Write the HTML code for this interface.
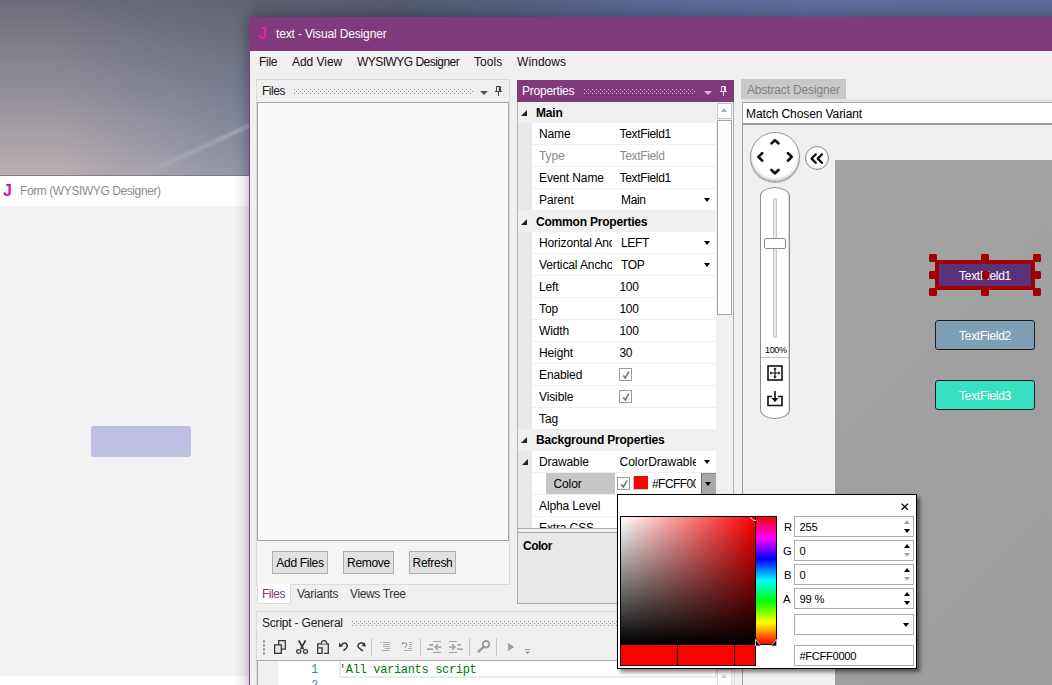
<!DOCTYPE html>
<html>
<head>
<meta charset="utf-8">
<title>text - Visual Designer</title>
<style>
*{box-sizing:border-box;margin:0;padding:0}
html,body{width:1052px;height:685px;overflow:hidden}
body{font-family:"Liberation Sans",sans-serif;font-size:12px;color:#000;position:relative;
background:linear-gradient(to right,#6c6d79 0,#70717c 150px,#5c6070 255px,#525a70 400px,#546080 520px,#57678f 626px,#5d6e9e 800px,#5b6d9d 1052px) 0 0/100% 20px no-repeat,#fff;
}
.abs{position:absolute}
.t{position:absolute;white-space:nowrap;line-height:14px;font-size:12px}
/* ---------- Form window ---------- */
#formwin{left:0;top:175px;width:252px;height:510px;background:#fff;border-top:1px solid #7d7d84}
#formtitle{left:0;top:0;width:252px;height:30px;background:#fff}
#formbody{left:0;top:30px;width:252px;height:470px;background:#f3f3f3}
#formrect{left:91px;top:250px;width:100px;height:31px;background:#bfbfe4;border-radius:3px}
/* ---------- Main window ---------- */
#main{left:249px;top:17px;width:820px;height:690px;background:#f0f0f0;border:1px solid #80397b;box-shadow:0 0 13px 1px rgba(0,0,0,.32)}
#titlebar{left:0;top:0;width:820px;height:33px;background:#80397b}
.menu{top:37px;color:#111}
.panelhdr{height:22px}
.grip{position:absolute;height:5px;--c:#909090;background:linear-gradient(to right,var(--c) 1px,rgba(0,0,0,0) 1px) 0 0/4px 1px repeat-x,linear-gradient(to right,var(--c) 1px,rgba(0,0,0,0) 1px) 2px 2px/4px 1px repeat-x,linear-gradient(to right,var(--c) 1px,rgba(0,0,0,0) 1px) 0 4px/4px 1px repeat-x}
.btn{position:absolute;height:23px;background:#e1e1e1;border:1px solid #adadad;text-align:center;line-height:22px;font-size:12px;letter-spacing:-.3px}
/* property grid */
#grid{left:268px;top:84px;width:199px;height:427px;overflow:hidden;background:#f0f0f0}
.row{position:absolute;left:0;width:198px;height:22px}
.cat{background:#f0f0f0;font-weight:bold}
.cat .lbl{position:absolute;left:18px;top:4px;line-height:14px;white-space:nowrap;font-size:12px;letter-spacing:-.2px}
.tri{position:absolute;left:3px;top:8px;width:0;height:0;border-left:6px solid transparent;border-bottom:6px solid #222}
.prop .ind{position:absolute;left:0;top:0;width:14px;height:22px;background:#e8e8e8}
.prop .cell{position:absolute;left:14px;top:0;width:184px;height:21px;background:#fff}
.prop .l{position:absolute;left:21px;top:4px;width:73px;letter-spacing:-.12px;overflow:hidden;white-space:nowrap;line-height:14px;font-size:12px}
.prop .v{position:absolute;left:101.5px;top:4px;letter-spacing:-.33px;white-space:nowrap;line-height:14px;font-size:12px}
.dd{position:absolute;left:185.700px;top:9px;width:0;height:0;border-left:3.800px solid transparent;border-right:3.800px solid transparent;border-top:4px solid #000}
.gray{color:#8a8a8a}
.cb{position:absolute;left:101px;top:4px;width:13px;height:13px;border:1px solid #9a9a9a;background:#fff}
/* popup */
#popup{left:617px;top:494px;width:300px;height:175px;background:#fff;border:1px solid #000;box-shadow:3px 3px 4px rgba(0,0,0,.5)}
.inp{position:absolute;left:176px;width:120px;height:21px;border:1px solid #ababab;background:#fff}
.inp span{position:absolute;left:4.500px;top:3px;line-height:14px;font-size:11.2px;letter-spacing:-.2px}
.plbl{position:absolute;font-size:11.2px;line-height:14px}
.up{position:absolute;right:3px;top:3px;width:0;height:0;border-left:3.5px solid transparent;border-right:3.5px solid transparent;border-bottom:4px solid #000}
.dn{position:absolute;right:3px;top:12px;width:0;height:0;border-left:3.5px solid transparent;border-right:3.5px solid transparent;border-top:4px solid #000}
.dis{opacity:.35}
</style>
</head>
<body>

<!-- desktop wallpaper (sky) visible at left -->
<div class="abs" style="left:0;top:0;width:252px;height:177px;background:linear-gradient(to bottom,#6d6d79 0,#918e98 90px,#bbb0b2 176px);overflow:hidden">
  <div class="abs" style="left:0;top:0;width:252px;height:177px;background:linear-gradient(to bottom,#5e6272 0,#767b91 90px,#9095a8 176px);-webkit-mask-image:linear-gradient(to right,rgba(0,0,0,0) 60px,rgba(0,0,0,.5) 160px,#000 250px);mask-image:linear-gradient(to right,rgba(0,0,0,0) 60px,rgba(0,0,0,.5) 160px,#000 250px)"></div>
  <div class="abs" style="left:138px;top:150px;width:124px;height:4px;background:linear-gradient(to right,rgba(190,196,210,.1),rgba(190,196,210,.55));filter:blur(1px);transform-origin:0 50%;transform:translate(0,25px) rotate(-24.800deg)"></div>
</div>

<!-- Form (WYSIWYG Designer) window -->
<div id="formwin" class="abs">
  <div id="formtitle" class="abs">
    <span class="t" style="left:3px;top:6px;font-size:16px;font-weight:bold;color:#d0189a;line-height:18px">J</span>
    <span class="t" id="ft" style="left:20px;top:8px;color:#8c8c8c;letter-spacing:-0.41px">Form (WYSIWYG Designer)</span>
  </div>
  <div id="formbody" class="abs"></div>
  <div id="formrect" class="abs"></div>
</div>

<!-- Main window -->
<div id="main" class="abs">
  <div id="titlebar" class="abs">
    <span class="t" style="left:8px;top:7px;font-size:16px;font-weight:bold;color:#e0209c;line-height:18px">J</span>
    <span class="t" id="tt" style="left:26px;top:9px;color:#fff;letter-spacing:-0.15px">text - Visual Designer</span>
  </div>
  <span class="t menu" id="m1" style="left:9px;letter-spacing:-0.29px">File</span>
  <span class="t menu" id="m2" style="left:42px;letter-spacing:-0.04px">Add View</span>
  <span class="t menu" id="m3" style="left:107px;letter-spacing:-0.53px">WYSIWYG Designer</span>
  <span class="t menu" id="m4" style="left:224px;letter-spacing:0.04px">Tools</span>
  <span class="t menu" id="m5" style="left:267px;letter-spacing:0.07px">Windows</span>

  <!-- Files panel (coords relative to 250,18) -->
  <div class="abs" style="left:6px;top:61px;width:254px;height:506px;border:1px solid #dadada;border-bottom:none"></div>
  <span class="t" id="fh" style="left:12px;top:66px;color:#222;letter-spacing:-0.47px">Files</span>
  <div class="grip" style="left:44px;top:71px;width:179px"></div>
  <div class="abs" style="left:229.500px;top:73px;width:0;height:0;border-left:4px solid transparent;border-right:4px solid transparent;border-top:4px solid #555"></div>
  <svg class="abs" style="left:244px;top:67px" width="9" height="12" viewBox="0 0 9 12"><path d="M2.5 1.5h4v5h-4z M1 6.5h7 M4.5 6.5v4.5" fill="none" stroke="#444" stroke-width="1"/><path d="M5.5 1.5v5" stroke="#444" stroke-width="1.4"/></svg>
  <div class="abs" style="left:7px;top:523px;width:252px;height:43px;background:#f5f5f5"></div>
  <div class="abs" style="left:7px;top:84px;width:252px;height:439px;background:#fafafa;border:1px solid #a4a4a4"></div>
  <div class="btn" id="b1" style="left:22px;top:533px;width:56px">Add Files</div>
  <div class="btn" id="b2" style="left:93px;top:533px;width:51px">Remove</div>
  <div class="btn" id="b3" style="left:159px;top:533px;width:47px">Refresh</div>
  <div class="abs" style="left:6px;top:566px;width:254px;height:1px;background:#dadada"></div>
  <div class="abs" style="left:7px;top:566px;width:34px;height:20px;background:#fff;border:1px solid #dadada;border-top:none"></div>
  <span class="t" id="tb1" style="left:12px;top:569px;color:#80397b;letter-spacing:-0.47px">Files</span>
  <span class="t" id="tb2" style="left:47px;top:569px;color:#333;letter-spacing:-0.24px">Variants</span>
  <span class="t" id="tb3" style="left:100px;top:569px;color:#333;letter-spacing:-0.36px">Views Tree</span>

  <!-- Script panel -->
  <div class="abs" style="left:6px;top:593px;width:479px;height:100px;border:1px solid #dadada"></div>
  <span class="t" id="sh" style="left:12px;top:598px;color:#222;letter-spacing:-0.2px">Script - General</span>
  <div class="grip" style="left:102px;top:603px;width:300px"></div>
  <svg id="toolbar" class="abs" style="left:7px;top:616px" width="477" height="26" viewBox="257 634 477 26">
    <g fill="#8a8a8a"><rect x="263" y="640.5" width="2" height="2"/><rect x="263" y="644.5" width="2" height="2"/><rect x="263" y="648.5" width="2" height="2"/><rect x="263" y="652.5" width="2" height="2"/></g>
    <!-- copy -->
    <g fill="#e6e6e6" stroke="#333" stroke-width="1.250"><path d="M278.700 640.700h6.600v8.400h-6.600z"/><path d="M274.600 644.800h6.700v8.500h-6.700z"/></g>
    <!-- cut -->
    <g fill="none" stroke="#333"><path d="M298.700 640.400l4.700 8.800M305.500 640.400l-4.700 8.800" stroke-width="1.700"/><ellipse cx="298.700" cy="651.500" rx="2.100" ry="1.850" stroke-width="1.200"/><ellipse cx="305.500" cy="651.500" rx="2.100" ry="1.850" stroke-width="1.200"/></g>
    <!-- paste -->
    <g stroke="#333" stroke-width="1.250"><path d="M317.700 647.500v-3.600h10.600v9.400h-4.200" fill="#e6e6e6"/><path d="M321.400 643.700c0-4 5.200-4 5.200 0" fill="#f0f0f0"/><path d="M317.700 647.900h4.400v5.400h-4.400z" fill="#f6f6f6"/></g>
    <!-- undo / redo -->
    <g fill="none" stroke="#333" stroke-width="1.500" stroke-linecap="butt"><path d="M341.500 645.200C342.500 642.600 346.400 642.200 347.200 645.200 347.800 647.500 345.600 649 343.500 650.500"/><path d="M362.900 651.100L358.800 647.800C357.200 646.200 358 643.200 360.600 642.900 362.200 642.700 363.600 643.600 364 645"/></g>
    <path d="M339 642.800l.2 4.500 3.900-1.100z" fill="#333"/><path d="M364.600 642.200l1.400 4.500-4.300-.9z" fill="#333"/>
    <g fill="#c2c2c2"><rect x="371" y="638.500" width="1" height="17.500"/><rect x="420" y="638.500" width="1" height="17.500"/><rect x="469" y="638.500" width="1" height="17.500"/><rect x="496" y="638.500" width="1" height="17.500"/></g>
    <!-- comment / uncomment (disabled) -->
    <g fill="#a9a9a9"><rect x="380" y="642" width="1.300" height="1"/><rect x="383" y="642" width="7" height="1"/><rect x="385" y="648" width="5" height="1"/><rect x="382" y="650" width="8" height="1"/>
    <rect x="409" y="642" width="3" height="1"/><rect x="408" y="648" width="4" height="1"/><rect x="404" y="650" width="8" height="1"/></g>
    <g fill="#92c092"><rect x="383" y="644" width="7" height="1"/><rect x="383" y="646" width="7" height="1"/><rect x="409" y="644" width="3" height="1"/><rect x="409" y="646" width="3" height="1"/></g>
    <path d="M403.300 643.300c2.200-1.200 4.200.2 3.400 2l-1.900 2.300" stroke="#9a9a9a" stroke-width="1.100" fill="none"/><path d="M402 642v2.800l2.600-1.800z" fill="#9a9a9a"/>
    <!-- outdent / indent (disabled) -->
    <g fill="#a0a0a0"><rect x="433" y="641" width="8" height="1"/><rect x="433" y="652" width="8" height="1"/><rect x="429" y="644" width="4" height="1.700"/><rect x="427" y="648.300" width="6" height="1.700"/>
    <rect x="434.500" y="646.300" width="6.500" height="1.500"/><path d="M434 647l3.400-3.300 1.100 1-2.400 2.300 2.400 2.300-1.100 1z"/>
    <rect x="449" y="641" width="8" height="1"/><rect x="449" y="652" width="8" height="1"/><rect x="457.300" y="644" width="3.500" height="1.700"/><rect x="457.300" y="648.300" width="5.500" height="1.700"/>
    <rect x="449" y="646.300" width="6.500" height="1.500"/><path d="M456 647l-3.400-3.300-1.100 1 2.400 2.300-2.400 2.300 1.100 1z"/></g>
    <!-- search -->
    <g stroke="#9a9a9a" fill="none"><circle cx="486" cy="644.300" r="3.300" stroke-width="1.800"/><path d="M483.600 646.800l-5 4.800" stroke-width="2.400" stroke-linecap="round"/></g>
    <!-- play / overflow -->
    <path d="M508.200 642.800l5.800 4.200-5.800 4.200z" fill="#9e9e9e"/>
    <path d="M525 649h5v1h-5zM525 651.500h5l-2.500 3z" fill="#9e9e9e"/>
  </svg>
  <div class="abs" style="left:7px;top:642px;width:477px;height:60px;background:#fff;border:1px solid #ababab"></div>
  <div class="abs" style="left:8px;top:643px;width:20px;height:60px;background:#f0f0f0"></div>
  <div class="abs" style="left:89px;top:643px;width:378px;height:17px;border:2px solid #ebebeb;border-top:none"></div>
  <span class="t" style="left:61px;top:645px;font-family:'Liberation Mono',monospace;font-size:12px;color:#2b91af">1</span>
  <span class="t" style="left:61px;top:661px;font-family:'Liberation Mono',monospace;font-size:12px;color:#2b91af">2</span>
  <span class="t" id="code" style="left:89px;top:645px;font-family:'Liberation Mono',monospace;font-size:12px;letter-spacing:-.33px;color:#008000">'All variants script</span>
  <div class="abs" style="left:467px;top:643px;width:17px;height:60px;background:#f0f0f0"></div>
  <div class="abs" style="left:467px;top:651px;width:15px;height:17px;background:#fdfdfd;border:1px solid #dcdcdc"></div>
  <div class="abs" style="left:471px;top:656px;width:0;height:0;border-left:3.5px solid transparent;border-right:3.5px solid transparent;border-bottom:4px solid #cfcfcf"></div>

  <!-- Properties panel -->
  <div class="abs" style="left:267px;top:62px;width:217px;height:524px;border:1px solid #b0b0b0;border-top:none;background:#f0f0f0"></div>
  <div class="abs" style="left:267px;top:62px;width:217px;height:22px;background:#80397b"></div>
  <span class="t" id="ph" style="left:272px;top:66px;color:#fff;letter-spacing:-0.24px">Properties</span>
  <div class="grip" style="left:334px;top:71px;width:111px;--c:#d9c3d7"></div>
  <div class="abs" style="left:454px;top:73px;width:0;height:0;border-left:4px solid transparent;border-right:4px solid transparent;border-top:4px solid #dcb8d9"></div>
  <svg class="abs" style="left:469px;top:67px" width="9" height="12" viewBox="0 0 9 12"><path d="M2.5 1.5h4v5h-4z M1 6.5h7 M4.5 6.5v4.5" fill="none" stroke="#f0d8ee" stroke-width="1"/><path d="M5.5 1.5v5" stroke="#f0d8ee" stroke-width="1.4"/></svg>
  <div id="grid" class="abs">
<div class="row cat" style="top:0px;height:21px"><div class="tri"></div><span class="lbl">Main</span></div>
<div class="row prop" style="top:21px;height:22px"><div class="ind" style="height:22px"></div><div class="cell" style="height:21px"></div><span class="l">Name</span><span class="v">TextField1</span></div>
<div class="row prop" style="top:43px;height:22px"><div class="ind" style="height:22px"></div><div class="cell" style="height:21px"></div><span class="l gray">Type</span><span class="v gray">TextField</span></div>
<div class="row prop" style="top:65px;height:22px"><div class="ind" style="height:22px"></div><div class="cell" style="height:21px"></div><span class="l">Event Name</span><span class="v">TextField1</span></div>
<div class="row prop" style="top:87px;height:21px"><div class="ind" style="height:21px"></div><div class="cell" style="height:21px"></div><span class="l">Parent</span><span class="v" style="left:103px">Main</span><div class="dd"></div></div>
<div class="row cat" style="top:108px;height:22px"><div class="tri" style="top:9px"></div><span class="lbl" style="top:5px">Common Properties</span></div>
<div class="row prop" style="top:130px;height:22px"><div class="ind" style="height:22px"></div><div class="cell" style="height:21px"></div><span class="l">Horizontal Anchor</span><span class="v" style="left:103px">LEFT</span><div class="dd"></div></div>
<div class="row prop" style="top:152px;height:22px"><div class="ind" style="height:22px"></div><div class="cell" style="height:21px"></div><span class="l">Vertical Anchor</span><span class="v" style="left:103px">TOP</span><div class="dd"></div></div>
<div class="row prop" style="top:174px;height:22px"><div class="ind" style="height:22px"></div><div class="cell" style="height:21px"></div><span class="l">Left</span><span class="v">100</span></div>
<div class="row prop" style="top:196px;height:22px"><div class="ind" style="height:22px"></div><div class="cell" style="height:21px"></div><span class="l">Top</span><span class="v">100</span></div>
<div class="row prop" style="top:218px;height:22px"><div class="ind" style="height:22px"></div><div class="cell" style="height:21px"></div><span class="l">Width</span><span class="v">100</span></div>
<div class="row prop" style="top:240px;height:22px"><div class="ind" style="height:22px"></div><div class="cell" style="height:21px"></div><span class="l">Height</span><span class="v">30</span></div>
<div class="row prop" style="top:262px;height:22px"><div class="ind" style="height:22px"></div><div class="cell" style="height:21px"></div><span class="l">Enabled</span><div class="cb"><svg class="abs" style="left:1px;top:1px" width="10" height="10" viewBox="0 0 10 10"><path d="M2.2 5.4 L4.3 8 L7.9 1.6" fill="none" stroke="#7d7d7d" stroke-width="1.7"/></svg></div></div>
<div class="row prop" style="top:284px;height:22px"><div class="ind" style="height:22px"></div><div class="cell" style="height:21px"></div><span class="l">Visible</span><div class="cb"><svg class="abs" style="left:1px;top:1px" width="10" height="10" viewBox="0 0 10 10"><path d="M2.2 5.4 L4.3 8 L7.9 1.6" fill="none" stroke="#7d7d7d" stroke-width="1.7"/></svg></div></div>
<div class="row prop" style="top:306px;height:21px"><div class="ind" style="height:21px"></div><div class="cell" style="height:21px"></div><span class="l">Tag</span><span class="v"></span></div>
<div class="row cat" style="top:327px;height:22px"><div class="tri"></div><span class="lbl">Background Properties</span></div>
<div class="row prop" style="top:349px;height:22px"><div class="ind" style="height:22px"></div><div class="cell" style="height:21px"></div><div class="tri" style="left:4px"></div><span class="l">Drawable</span><span class="v" style="width:76px;overflow:hidden;letter-spacing:0">ColorDrawable</span><div class="dd"></div></div>
<div class="row prop" style="top:371px;height:22px"><div class="ind" style="height:22px"></div><div class="cell" style="height:21px"></div><div class="abs" style="left:28px;top:0;width:69px;height:21px;background:#c6c6c6"></div><span class="l" style="left:35.500px;width:55px">Color</span><div class="cb" style="left:99px;top:4px"><svg class="abs" style="left:1px;top:1px" width="10" height="10" viewBox="0 0 10 10"><path d="M2.2 5.4 L4.3 8 L7.9 1.6" fill="none" stroke="#7d7d7d" stroke-width="1.7"/></svg></div><div class="abs" style="left:115px;top:3px;width:15px;height:14px;background:#fe0000;border:1px solid #d9c4c4;border-top:none;border-right:none"></div><span class="v" style="left:134px;width:44px;overflow:hidden;letter-spacing:-.55px">#FCFF0000</span><div class="abs" style="left:183px;top:0;width:15px;height:21px;background:#a8a8a8;border-left:1px solid #6e6e6e;border-top:1px solid #8a8a8a"></div><div class="dd" style="left:187px"></div></div>
<div class="row prop" style="top:393px;height:22px"><div class="ind" style="height:22px"></div><div class="cell" style="height:21px"></div><span class="l">Alpha Level</span><span class="v"></span></div>
<div class="row prop" style="top:415px;height:22px"><div class="ind" style="height:22px"></div><div class="cell" style="height:21px"></div><span class="l">Extra CSS</span><span class="v"></span></div>
  </div>
  <!-- grid scrollbar -->
  <div class="abs" style="left:467px;top:84px;width:16px;height:427px;background:#f0f0f0"></div>
  <div class="abs" style="left:467px;top:85px;width:15px;height:16px;background:#fdfdfd;border:1px solid #c6c6c6"></div>
  <div class="abs" style="left:471px;top:90px;width:0;height:0;border-left:3.5px solid transparent;border-right:3.5px solid transparent;border-bottom:4px solid #b0b0b0"></div>
  <div class="abs" style="left:467px;top:102px;width:15px;height:195px;background:#fdfdfd;border:1px solid #a6a6a6"></div>
  <!-- description -->
  <div class="abs" style="left:267px;top:510px;width:217px;height:1px;background:#b0b0b0"></div>
  <div class="abs" style="left:267px;top:514px;width:217px;height:72px;background:#e8e8e8;border:1px solid #a8a8a8"></div>
  <span class="t" id="dc" style="left:273px;top:521px;font-weight:bold;letter-spacing:-.5px">Color</span>

  <!-- Designer panel (coords relative to 250,18) -->
  <div class="abs" style="left:491px;top:61px;width:105px;height:20px;background:#c9c9c9"></div>
  <span class="t" id="ad" style="left:497px;top:65px;color:#7f7f7f;letter-spacing:-0.15px">Abstract Designer</span>
  <div class="abs" style="left:491px;top:81px;width:330px;height:3px;background:#e3e3e3"></div>
  <div class="abs" style="left:492px;top:84px;width:330px;height:23px;background:#fff;border:1px solid #a6a6a6;border-bottom:2px solid #9c9c9c"></div>
  <span class="t" id="mc" style="left:496px;top:89px;letter-spacing:-0.09px">Match Chosen Variant</span>
  <div class="abs" style="left:492px;top:107px;width:1px;height:600px;background:#a0a0a0"></div>
  <!-- canvas -->
  <div class="abs" style="left:585px;top:142px;width:240px;height:560px;background:linear-gradient(135deg,#a3a3a3 0%,#9d9d9d 100%)"></div>
  <!-- nav circle -->
  <div class="abs" style="left:500px;top:114px;width:50px;height:50px;border-radius:50%;background:#fff;border:1px solid #9a9a9a;box-shadow:inset 0 -2px 3px rgba(0,0,0,.18),0 1px 1px rgba(0,0,0,.25)"></div>
  <svg class="abs" style="left:500px;top:114px" width="50" height="50" viewBox="0 0 50 50"><g fill="none" stroke="#0c0c0c" stroke-width="2.600" stroke-linecap="round" stroke-linejoin="round"><path d="M21.500 11.400L25 8.300l3.500 3.100"/><path d="M21.500 38l3.500 3.400 3.500-3.400"/><path d="M12.200 21.100L8.400 24.900l3.800 3.800"/><path d="M37.900 21.100l3.900 3.800-3.900 3.800"/></g></svg>
  <div class="abs" style="left:555px;top:128px;width:24px;height:24px;border-radius:50%;background:#fff;border:1px solid #8a8a8a;box-shadow:inset 0 -1px 2px rgba(0,0,0,.12)"></div>
  <svg class="abs" style="left:555px;top:128px" width="24" height="24" viewBox="0 0 24 24"><g fill="none" stroke="#0c0c0c" stroke-width="2.200" stroke-linecap="round" stroke-linejoin="round"><path d="M10.800 8.300l-4.300 4.300 4.300 4.300"/><path d="M17 8.300l-4.300 4.300 4.300 4.300"/></g></svg>
  <!-- slider -->
  <div class="abs" style="left:510px;top:169px;width:30px;height:232px;background:#fff;border:1px solid #8e8e8e;border-radius:15px/9px;box-shadow:inset -1px 0 1px rgba(0,0,0,.15)"></div>
  <div class="abs" style="left:523px;top:180px;width:4px;height:140px;background:#e6e9e8;border:1px solid #c9c9c9;border-radius:2px"></div>
  <div class="abs" style="left:514px;top:220px;width:22px;height:11px;background:#fff;border:1px solid #8c8c8c;border-radius:2px"></div>
  <span class="t" id="pct" style="left:515px;top:327px;font-size:9px;line-height:11px;letter-spacing:-.35px">100%</span>
  <div class="abs" style="left:511px;top:339px;width:28px;height:1px;background:#c4c4c4"></div>
  <svg class="abs" style="left:517px;top:347px" width="16" height="16" viewBox="0 0 16 16"><rect x="1" y="1" width="14" height="14" fill="#fff" stroke="#111" stroke-width="1.6"/><path d="M8 3.2v9.6M3.2 8h9.6" stroke="#111" stroke-width="1.2" fill="none"/><path d="M8 2.6l1.8 2H6.2zM8 13.4l1.8-2H6.2zM2.6 8l2-1.8v3.6zM13.4 8l-2-1.8v3.6z" fill="#111"/></svg>
  <svg class="abs" style="left:517px;top:372px" width="16" height="17" viewBox="0 0 16 17"><path d="M5 6.5H1v9h14v-9h-4" fill="none" stroke="#111" stroke-width="1.6"/><path d="M8 1v9" stroke="#111" stroke-width="1.6"/><path d="M4.6 8h6.8L8 12.2z" fill="#111"/></svg>
  <!-- text fields -->
  <div class="abs" style="left:685px;top:242px;width:100px;height:30px;background:#5c317b;border:4px solid #a00000"></div>
  <span class="t" id="tf1" style="left:709px;top:251px;color:#fff;letter-spacing:-0.27px">TextField1</span>
  <div class="abs" style="left:679px;top:236px;width:8px;height:8px;background:#a00000;border-radius:1.5px"></div><div class="abs" style="left:679px;top:253px;width:8px;height:8px;background:#a00000;border-radius:1.5px"></div><div class="abs" style="left:679px;top:270px;width:8px;height:8px;background:#a00000;border-radius:1.5px"></div><div class="abs" style="left:731px;top:236px;width:8px;height:8px;background:#a00000;border-radius:1.5px"></div><div class="abs" style="left:732px;top:253px;width:7px;height:8px;background:#a00000;border-radius:1.5px"></div><div class="abs" style="left:731px;top:270px;width:8px;height:8px;background:#a00000;border-radius:1.5px"></div><div class="abs" style="left:783px;top:236px;width:8px;height:8px;background:#a00000;border-radius:1.5px"></div><div class="abs" style="left:783px;top:253px;width:8px;height:8px;background:#a00000;border-radius:1.5px"></div><div class="abs" style="left:783px;top:270px;width:8px;height:8px;background:#a00000;border-radius:1.5px"></div>
  <div class="abs" style="left:685px;top:302px;width:100px;height:30px;background:#7f9fb6;border:1px solid #1c1c1c;border-radius:3px"></div>
  <span class="t" id="tf2" style="left:709px;top:311px;color:#fff;letter-spacing:-0.27px">TextField2</span>
  <div class="abs" style="left:685px;top:362px;width:100px;height:30px;background:#36e0c0;border:1px solid #1c1c1c;border-radius:3px"></div>
  <span class="t" id="tf3" style="left:709px;top:371px;color:#fff;letter-spacing:-0.27px">TextField3</span>

</div>

<!-- Color popup (page coords) -->
<div id="popup" class="abs">
  <svg class="abs" style="left:282px;top:7px" width="10" height="10" viewBox="0 0 10 10"><path d="M1.600 1.700l6.300 6.100M7.900 1.700L1.600 7.800" stroke="#111" stroke-width="1.350" fill="none"/></svg>
  <div class="abs" style="left:2px;top:21px;width:136px;height:129px;border:1px solid #000;background:linear-gradient(to bottom,rgba(0,0,0,0),#000),linear-gradient(to right,#fff,#f00)"></div>
  <div class="abs" style="left:137px;top:21px;width:22px;height:129px;border:1px solid #000;background:linear-gradient(to bottom,#ff0000 0%,#ff00ff 16.6%,#0000ff 33.3%,#00ffff 50%,#00ff00 66.6%,#ffff00 83.3%,#ff0000 100%)"></div>
  <div class="abs" style="left:2px;top:150px;width:136px;height:21px;background:#fe0000;border:1px solid #000;border-top:none"></div>
  <div class="abs" style="left:59px;top:150px;width:1px;height:20px;background:#000"></div>
  <div class="abs" style="left:116px;top:150px;width:1px;height:20px;background:#000"></div>
  <svg class="abs" style="left:136px;top:142px" width="24" height="10" viewBox="0 0 24 10"><path d="M1.500 2.500v6.500h5.500z" fill="#000" stroke="#ddd" stroke-width=".8"/><path d="M22.500 2.500v6.500h-5.500z" fill="#000" stroke="#ddd" stroke-width=".8"/></svg>
  <svg class="abs" style="left:128px;top:22px" width="10" height="10" viewBox="0 0 10 10"><circle cx="9" cy="-1" r="4.500" fill="none" stroke="#fff" stroke-width="1" opacity=".9"/></svg>
  <span class="plbl" style="left:166px;top:25px">R</span>
  <span class="plbl" style="left:165px;top:49px">G</span>
  <span class="plbl" style="left:166px;top:73px">B</span>
  <span class="plbl" style="left:165px;top:97px">A</span>
  <div class="inp" style="top:21px"><span>255</span><div class="up dis"></div><div class="dn"></div></div>
  <div class="inp" style="top:45px"><span>0</span><div class="up"></div><div class="dn dis"></div></div>
  <div class="inp" style="top:69px"><span>0</span><div class="up"></div><div class="dn dis"></div></div>
  <div class="inp" style="top:93px"><span>99 %</span><div class="up"></div><div class="dn"></div></div>
  <div class="inp" style="top:119px;height:21px"><div class="dn" style="top:8px;border-top-width:4px;border-left-width:3.700px;border-right-width:3.700px;right:4px"></div></div>
  <div class="inp" style="top:150px;height:21px"><span id="hex" style="letter-spacing:-.35px">#FCFF0000</span></div>
</div>

</body>
</html>
